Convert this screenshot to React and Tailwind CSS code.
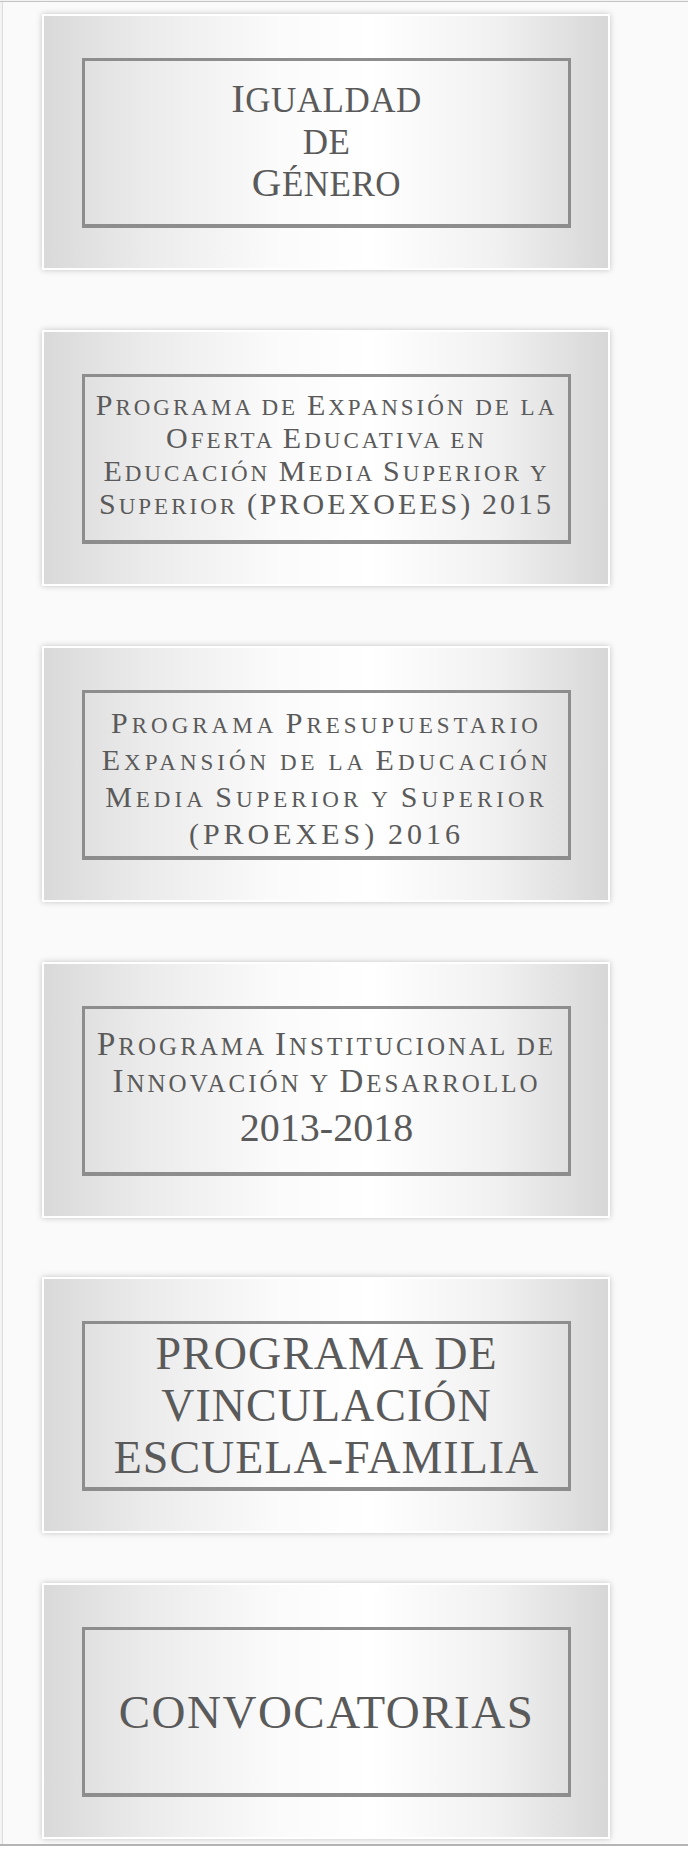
import React from 'react';

// Words written in normal case: the first capital is drawn large, the rest as small caps.
// Words that are already all caps (acronyms, years) stay large.
const Caps = ({ text, big, small }) =>
    text.split(' ').map((w, i) => {
        const sm = `${small} leading-none uppercase`;
        const space = i > 0 ? <span className={sm}> </span> : null;
        if (w === w.toUpperCase()) {
            return <React.Fragment key={i}>{space}<span className={big}>{w}</span></React.Fragment>;
        }
        const first = w[0];
        if (first === first.toUpperCase()) {
            return (
                <React.Fragment key={i}>
                    {space}
                    <span className={big}>{first}</span>
                    <span className={sm}>{w.slice(1)}</span>
                </React.Fragment>
            );
        }
        return <React.Fragment key={i}>{space}<span className={sm}>{w}</span></React.Fragment>;
    });

const Card = ({ className = '', children }) => (
    <div
        className={`w-[568px] h-[256px] border-2 border-white shadow-[0_0_6px_rgba(0,0,0,0.22)] bg-[linear-gradient(90deg,#d9d9d9_0%,#ebebeb_18%,#fafafa_40%,#ffffff_58%,#f1f1f1_80%,#d7d7d7_100%)] pt-[42px] pb-[40px] pl-[38px] pr-[37px] ${className}`}
    >
        <div className="h-full border-[3px] border-b-4 border-[#8d8d8d] flex flex-col items-center justify-center text-center whitespace-nowrap">
            {children}
        </div>
    </div>
);

export default function App() {
    return (
        <div className="w-[688px] h-[1854px] bg-white font-['Liberation_Serif','Times_New_Roman',serif] text-[#5a5a5a]">
            <div className="h-px bg-[#f2f2f2]" />
            <div className="h-[1845px] border-t border-b-2 border-t-[#c4c4c4] border-b-[#b5b5b5] bg-[#f4f4f4] pl-[2px]">
                <div className="h-full border-l border-[#dcdcdc] bg-[#fafafa] pt-3 pl-[39px]">
                    {/* Igualdad de género */}
                    <Card className="mb-[60px]">
                        <div className="text-[41px] leading-[42px] tracking-[0.5px] pb-[6px]">
                            <div><Caps text="Igualdad" big="text-[41px]" small="text-[35px]" /></div>
                            <div><Caps text="de" big="text-[41px]" small="text-[35px]" /></div>
                            <div><Caps text="Género" big="text-[41px]" small="text-[35px]" /></div>
                        </div>
                    </Card>

                    {/* PROEXOEES 2015 */}
                    <Card className="mb-[60px]">
                        <div className="text-[30px] leading-[33px] tracking-[3px] pb-[10px]">
                            <div><Caps text="Programa de Expansión de la" big="text-[30px]" small="text-[23px]" /></div>
                            <div><Caps text="Oferta Educativa en" big="text-[30px]" small="text-[23px]" /></div>
                            <div><Caps text="Educación Media Superior y" big="text-[30px]" small="text-[23px]" /></div>
                            <div><Caps text="Superior (PROEXOEES) 2015" big="text-[30px]" small="text-[23px]" /></div>
                        </div>
                    </Card>

                    {/* PROEXES 2016 */}
                    <Card className="mb-[60px]">
                        <div className="text-[30px] leading-[37px] tracking-[4px] pt-[6px]">
                            <div><Caps text="Programa Presupuestario" big="text-[30px]" small="text-[23px]" /></div>
                            <div><Caps text="Expansión de la Educación" big="text-[30px]" small="text-[23px]" /></div>
                            <div><Caps text="Media Superior y Superior" big="text-[30px]" small="text-[23px]" /></div>
                            <div><Caps text="(PROEXES) 2016" big="text-[30px]" small="text-[23px]" /></div>
                        </div>
                    </Card>

                    {/* Programa institucional */}
                    <Card className="mb-[59px]">
                        <div className="text-[33px] leading-[37px] tracking-[3px]">
                            <div><Caps text="Programa Institucional de" big="text-[33px]" small="text-[25px]" /></div>
                            <div><Caps text="Innovación y Desarrollo" big="text-[33px]" small="text-[25px]" /></div>
                        </div>
                        <div className="text-[40px] leading-[56px]">2013-2018</div>
                    </Card>

                    {/* Vinculación escuela-familia */}
                    <Card className="mb-[50px]">
                        <div className="text-[46px] leading-[52px] tracking-[1px]">
                            <div>PROGRAMA DE</div>
                            <div>VINCULACIÓN</div>
                            <div>ESCUELA-FAMILIA</div>
                        </div>
                    </Card>

                    {/* Convocatorias */}
                    <Card>
                        <div className="text-[47px] leading-[52px] tracking-[1.5px]">CONVOCATORIAS</div>
                    </Card>
                </div>
            </div>
        </div>
    );
}
